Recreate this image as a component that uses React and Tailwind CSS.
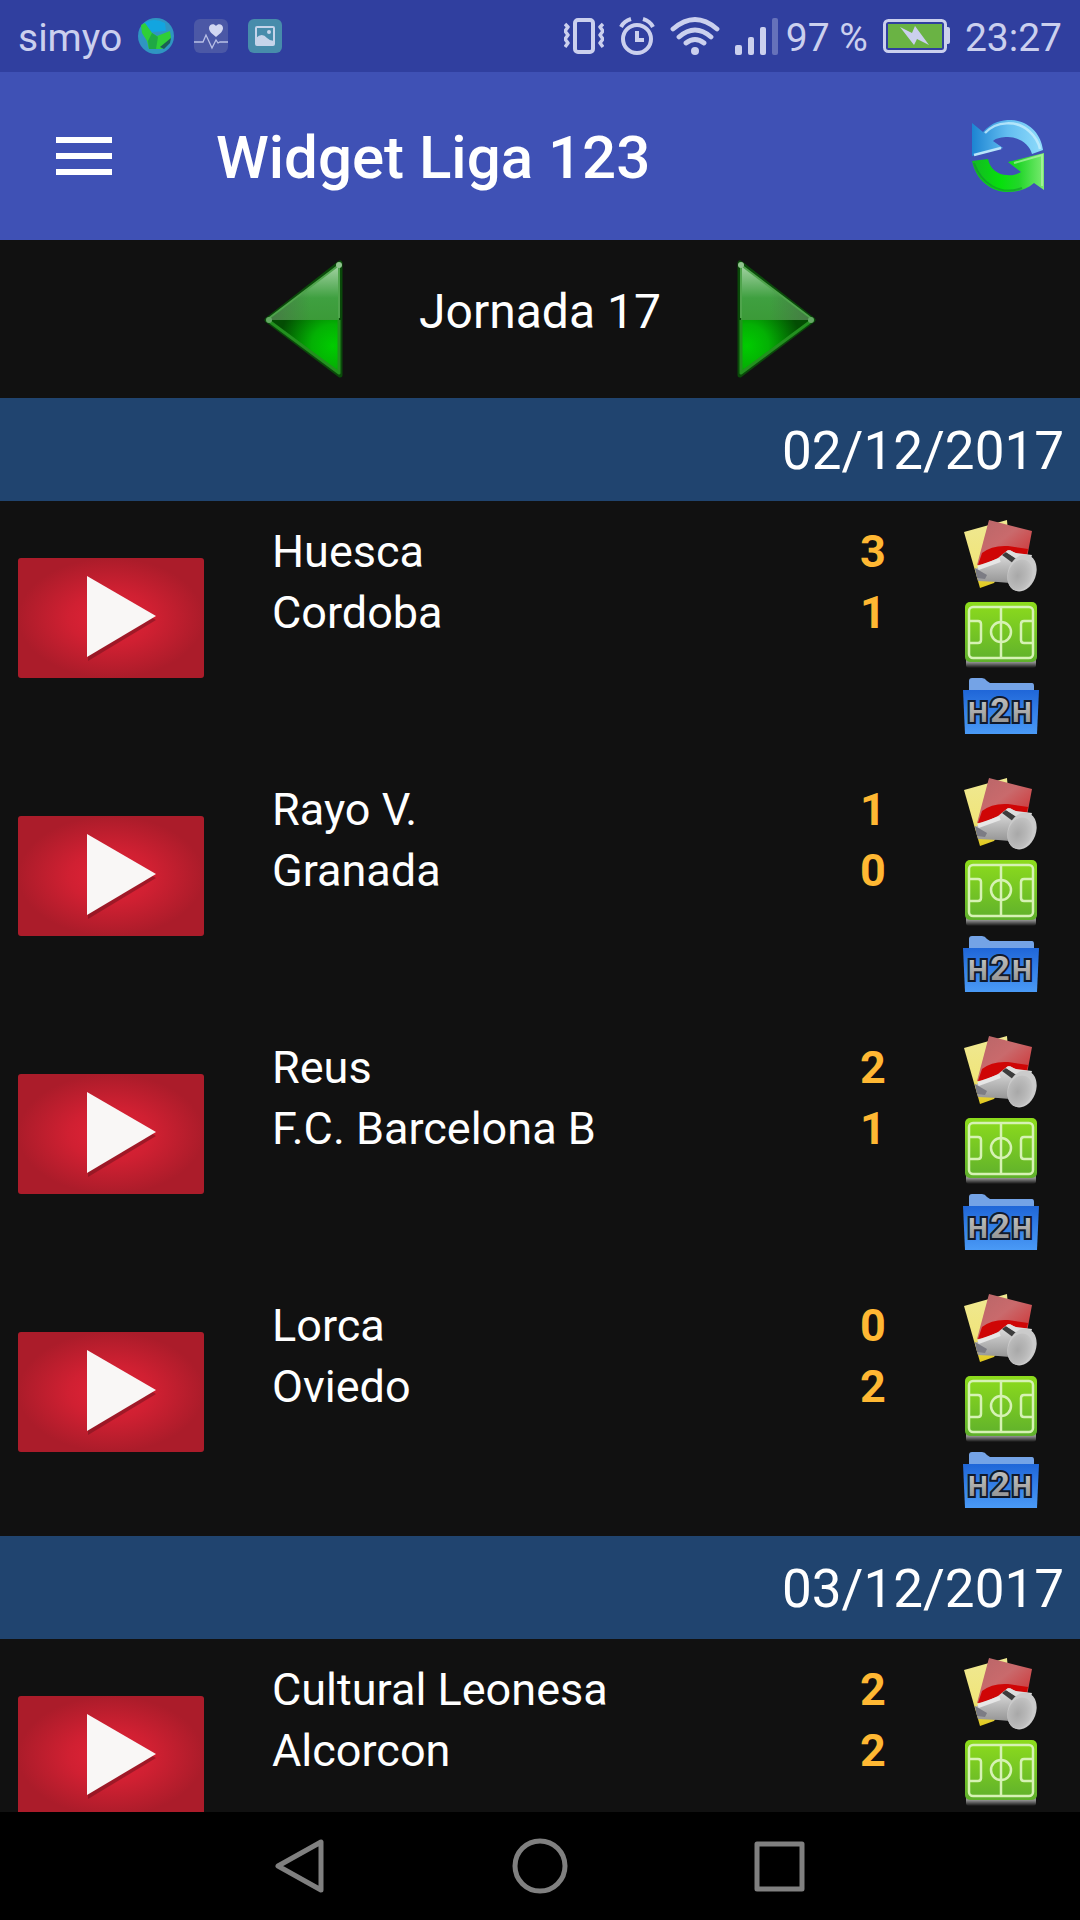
import React, { useState } from 'react'

const matchDays = [
  {
    date: '02/12/2017',
    matches: [
      { home: 'Huesca', away: 'Cordoba', score: [3, 1], h2h: true },
      { home: 'Rayo V.', away: 'Granada', score: [1, 0], h2h: true },
      { home: 'Reus', away: 'F.C. Barcelona B', score: [2, 1], h2h: true },
      { home: 'Lorca', away: 'Oviedo', score: [0, 2], h2h: true },
    ],
  },
  {
    date: '03/12/2017',
    matches: [{ home: 'Cultural Leonesa', away: 'Alcorcon', score: [2, 2], h2h: false }],
  },
]

/* gradients shared by every icon on the page */
function IconDefs() {
  return (
    <svg width="0" height="0" className="absolute" aria-hidden="true">
      <defs>
        <radialGradient id="video" cx="50%" cy="50%" r="50%">
          <stop offset="0%" stopColor="#e32337" />
          <stop offset="45%" stopColor="#d02032" />
          <stop offset="100%" stopColor="#ab1c2a" />
        </radialGradient>
        <linearGradient id="arrow-top" x1="0" x2="0" y1="0" y2="1">
          <stop offset="0%" stopColor="#a5d3a5" />
          <stop offset="60%" stopColor="#3fa040" />
          <stop offset="100%" stopColor="#3b9a38" />
        </linearGradient>
        <radialGradient id="arrow-bottom" gradientUnits="userSpaceOnUse" cx="68" cy="86" r="54">
          <stop offset="0%" stopColor="#00cc00" />
          <stop offset="40%" stopColor="#04b004" />
          <stop offset="100%" stopColor="#034d03" />
        </radialGradient>
        <linearGradient id="arrow-shade" x1="0" x2="1" y1="0" y2="0">
          <stop offset="0%" stopColor="#4b6b4b" stopOpacity="0.7" />
          <stop offset="60%" stopColor="#4b6b4b" stopOpacity="0" />
        </linearGradient>
        <linearGradient id="sync-blue" x1="0" x2="1" y1="0" y2="0">
          <stop offset="0%" stopColor="#1c84d2" />
          <stop offset="50%" stopColor="#63bdf0" />
          <stop offset="100%" stopColor="#8fdcfb" />
        </linearGradient>
        <linearGradient id="sync-green" x1="0" x2="1" y1="0" y2="0">
          <stop offset="0%" stopColor="#14b824" />
          <stop offset="40%" stopColor="#06e00c" />
          <stop offset="65%" stopColor="#22d62a" />
          <stop offset="100%" stopColor="#7aea70" />
        </linearGradient>
        <linearGradient id="card-yellow" x1="0" x2="0" y1="0" y2="1">
          <stop offset="0%" stopColor="#efe892" />
          <stop offset="60%" stopColor="#f0e57c" />
          <stop offset="100%" stopColor="#e0c81c" />
        </linearGradient>
        <linearGradient id="card-red" x1="0" x2="1" y1="0" y2="1">
          <stop offset="0%" stopColor="#b86668" />
          <stop offset="45%" stopColor="#c96a6c" />
          <stop offset="100%" stopColor="#d02a2c" />
        </linearGradient>
        <linearGradient id="whistle" x1="0" x2="0" y1="0" y2="1">
          <stop offset="0%" stopColor="#e8e8e8" />
          <stop offset="50%" stopColor="#bcbcbc" />
          <stop offset="100%" stopColor="#969696" />
        </linearGradient>
        <radialGradient id="whistle-ball" cx="42%" cy="55%" r="60%">
          <stop offset="0%" stopColor="#a8a8a8" />
          <stop offset="60%" stopColor="#b8b8b8" />
          <stop offset="100%" stopColor="#c6c6c6" />
        </radialGradient>
        <linearGradient id="pitch" x1="0" x2="0" y1="0" y2="1">
          <stop offset="0%" stopColor="#8ddc1c" />
          <stop offset="100%" stopColor="#5fb02c" />
        </linearGradient>
        <linearGradient id="pitch-shadow" x1="0" x2="0" y1="0" y2="1">
          <stop offset="0%" stopColor="#b0b0b0" />
          <stop offset="50%" stopColor="#8a8a8a" />
          <stop offset="100%" stopColor="#111111" />
        </linearGradient>
        <linearGradient id="folder" x1="0" x2="0" y1="0" y2="1">
          <stop offset="0%" stopColor="#1f66d8" />
          <stop offset="100%" stopColor="#4a9af6" />
        </linearGradient>
        <linearGradient id="metal" x1="0" x2="0" y1="0" y2="1">
          <stop offset="0%" stopColor="#c9c9c9" />
          <stop offset="100%" stopColor="#8a8a8a" />
        </linearGradient>
      </defs>
    </svg>
  )
}

function GlobeIcon() {
  return (
    <svg width="36" height="36" viewBox="0 0 36 36" aria-hidden="true">
      <circle cx="18" cy="18" r="18" fill="#2f95c2" />
      <path d="M6 5 Q16 -1 27 5 L28 13 L14 14 Z" fill="#12a5e0" />
      <path d="M3 7 L7 5 L14 15 L19 18 L32 13 L33 20 L24 31 L11 31 L9 23 L4 15 Z" fill="#2fcf38" />
      <path d="M14 15 L20 19 L18 31 L11 31 L10 23 Z" fill="#1fa845" />
      <path d="M22 29 L33 20 L32 25 L26 31 Z" fill="#1b5f55" />
    </svg>
  )
}

function HealthIcon() {
  return (
    <svg width="34" height="34" viewBox="0 0 34 34" aria-hidden="true">
      <rect width="34" height="34" rx="6" fill="#4b58a6" />
      <path d="M22 18 C17 14 15 12 15 9 C15 5 20 4 22 7 C24 4 29 5 29 9 C29 12 27 14 22 18 Z" fill="#d3d8f2" />
      <path d="M0 23 h9 l3 -7 l6 13 l4 -8 l2 3 l2 -1 h8" fill="none" stroke="#b9c0e6" strokeWidth="1.3" />
    </svg>
  )
}

function GalleryIcon() {
  return (
    <svg width="34" height="34" viewBox="0 0 34 34" aria-hidden="true">
      <rect width="34" height="34" rx="6" fill="#478cab" />
      <rect x="8" y="8" width="18" height="18" rx="1" fill="none" stroke="#c5d4ea" strokeWidth="2" />
      <circle cx="21" cy="13" r="2" fill="#c5d4ea" />
      <path d="M8 26 V19 Q14 13 19 19 Q22 22 26 22 V26 Z" fill="#c5d4ea" />
    </svg>
  )
}

function VibrateIcon() {
  return (
    <svg width="40" height="36" viewBox="0 0 40 36" fill="none" stroke="currentColor" aria-hidden="true">
      <rect x="11" y="2" width="18" height="32" rx="3" strokeWidth="4" />
      <path d="M1 6 l3 3 l-3 4 l3 4 l-3 4 l3 4 l-3 4" strokeWidth="3.5" strokeLinejoin="round" />
      <path d="M39 6 l-3 3 l3 4 l-3 4 l3 4 l-3 4 l3 4" strokeWidth="3.5" strokeLinejoin="round" />
    </svg>
  )
}

function AlarmIcon() {
  return (
    <svg width="36" height="38" viewBox="0 0 36 38" fill="none" stroke="currentColor" aria-hidden="true">
      <circle cx="18" cy="22" r="14" strokeWidth="4" />
      <path d="M18 14 v9 h7" strokeWidth="4" />
      <path d="M2 10 Q5 4 12 2 M34 10 Q31 4 24 2" strokeWidth="4" />
    </svg>
  )
}

function WifiIcon() {
  return (
    <svg width="50" height="38" viewBox="0 0 50 38" fill="none" stroke="currentColor" strokeLinecap="round" aria-hidden="true">
      <path d="M3 12 Q25 -7 47 12 M9 20 Q25 6 41 20 M16 26 Q25 19 34 26" strokeWidth="4.8" />
      <circle cx="25" cy="34" r="4" fill="currentColor" stroke="none" />
    </svg>
  )
}

function SignalIcon() {
  return (
    <svg width="44" height="37" viewBox="0 0 44 37" fill="currentColor" aria-hidden="true">
      <rect x="0" y="27" width="7" height="10" rx="2" />
      <rect x="13" y="19" width="6" height="18" rx="2" />
      <rect x="25" y="9" width="6" height="28" rx="2" />
      <rect x="37" y="0" width="6" height="37" rx="2" opacity="0.35" />
    </svg>
  )
}

function BatteryIcon() {
  return (
    <svg width="67" height="34" viewBox="0 0 67 34" aria-hidden="true">
      <rect x="1.5" y="1.5" width="61" height="31" rx="4" fill="none" stroke="currentColor" strokeWidth="3" />
      <path d="M63 8 h2 q2 0 2 2 v13 q0 2 -2 2 h-2 Z" fill="currentColor" />
      <rect x="5" y="5" width="54" height="24" fill="#6ab344" />
      <path d="M17 8 L29 14 L32 7 L46 26 L34 20 L31 26 Z" fill="currentColor" />
    </svg>
  )
}

function SyncIcon() {
  return (
    <svg width="72" height="72" viewBox="0 0 72 72" aria-hidden="true">
      <path
        d="M0 3 L11 12 C20 2 29 0 39 0 C57 1 69 14 71 30 L60 34 C58 25 47 17 36 17 C30 17 24 18 21 21 L31 28 L0 36 Z"
        fill="url(#sync-blue)"
      />
      <path d="M13 13 C24 1 45 0 57 11 Q66 19 68 29" fill="none" stroke="#c5eefc" strokeWidth="2.5" opacity="0.8" />
      <path d="M2 35 L29 28" stroke="#b9e5fa" strokeWidth="2.5" />
      <path
        d="M72 70 L62 63 C54 70 45 72 35 72 C18 71 4 60 0 41 L16 39 C18 49 26 55 35 55 C41 56 45 54 49 52 L36 42 L72 33 Z"
        fill="url(#sync-green)"
      />
      <path d="M42 43 L70 35 V66" fill="none" stroke="#b4f5a8" strokeWidth="2" opacity="0.7" />
      <path d="M2 43 Q7 58 20 66 Q34 74 50 68" fill="none" stroke="#14902f" strokeWidth="2" opacity="0.6" />
    </svg>
  )
}

function RoundArrow({ flip = false }) {
  return (
    <svg width="80" height="118" viewBox="-1 0 80 118" className={flip ? '-scale-x-100' : ''} aria-hidden="true">
      <path d="M75 3 V115 L2 60 Z" fill="#064d06" stroke="#0a4a0a" strokeWidth="5" strokeLinejoin="round" />
      <path d="M74 5 V60 H3 Z" fill="url(#arrow-top)" />
      <path d="M74 5 V60 H3 Z" fill="url(#arrow-shade)" />
      <path d="M3 60 H74 V113 Z" fill="url(#arrow-bottom)" />
      <path d="M4 61 L74 113 V60" fill="none" stroke="#23901f" strokeWidth="3" strokeLinejoin="round" />
      <path d="M3 59 L74 5 V58" fill="none" stroke="#4fa44c" strokeWidth="2" strokeLinejoin="round" />
      <circle cx="4" cy="60" r="3" fill="#64a864" />
      <circle cx="74" cy="5" r="3" fill="#8fc48d" />
    </svg>
  )
}

function VideoIcon() {
  return (
    <svg width="186" height="120" viewBox="0 0 186 120" aria-hidden="true">
      <rect width="186" height="120" rx="3" fill="url(#video)" />
      <path d="M70 22 L138 62 L70 103 Z" fill="#7d1420" opacity="0.6" />
      <path d="M69 18 L138 58 L69 99 Z" fill="#f9f7f6" />
    </svg>
  )
}

function CardsIcon() {
  return (
    <svg width="74" height="74" viewBox="0 0 74 74" aria-hidden="true">
      <path d="M0 13 L43 1 L46 40 L30 64 L16 69 Z" fill="url(#card-yellow)" />
      <path d="M25 1 L68 12 L62 44 L13 46 Z" fill="url(#card-red)" />
      <path d="M14 46 L18 34 Q28 26 44 27 L64 30 L61 42 L40 40 Z" fill="#cf0606" />
      <path d="M11 50 L34 39 L44 31 L52 34 L68 36 L64 50 L46 64 L34 63 L14 62 Z" fill="url(#whistle)" />
      <path d="M11 49 L23 56 L21 60 L13 59 Z" fill="#7c7c84" />
      <path d="M14 49 L36 41" fill="none" stroke="#e6e6e6" strokeWidth="4" />
      <path d="M38 36 L42 33 L54 41 L50 45 Z" fill="#3c3c3c" />
      <path d="M42 33 L46 31 L58 38 L55 41 Z" fill="#dedede" />
      <ellipse cx="58" cy="54" rx="14" ry="19" fill="#cbcbcb" transform="rotate(20 58 54)" />
      <ellipse cx="56" cy="56" rx="12" ry="16" fill="url(#whistle-ball)" transform="rotate(20 56 56)" />
    </svg>
  )
}

function PitchIcon() {
  return (
    <svg width="74" height="68" viewBox="0 0 74 68" aria-hidden="true">
      <rect x="2" y="56" width="70" height="11" rx="3" fill="url(#pitch-shadow)" />
      <rect x="1" y="1" width="72" height="60" rx="5" fill="url(#pitch)" />
      <g fill="none" stroke="#d6f2b4" strokeWidth="2.5">
        <rect x="5" y="6" width="64" height="51" rx="4" />
        <path d="M37 6 V57" />
        <circle cx="37" cy="31" r="10" />
        <path d="M5 20 H14 Q17 20 17 23 V39 Q17 42 14 42 H5 M69 20 H60 Q57 20 57 23 V39 Q57 42 60 42 H69" />
      </g>
    </svg>
  )
}

function HeadToHeadIcon() {
  return (
    <svg width="76" height="58" viewBox="0 0 76 58" aria-hidden="true">
      <path d="M6 14 V4 Q6 1 9 1 H19 Q22 1 24 4 L27 6 H69 Q71 6 71 9 V14 Z" fill="#74a3e6" />
      <path d="M0 13 H76 L74 57 H2 Z" fill="url(#folder)" />
      <g
        fill="url(#metal)"
        stroke="#10192b"
        strokeWidth="4"
        paintOrder="stroke"
        fontFamily="Roboto, sans-serif"
        fontWeight="bold"
        textAnchor="middle"
      >
        <text x="15" y="45" fontSize="28">H</text>
        <text x="59" y="45" fontSize="28">H</text>
        <text x="37" y="45" fontSize="34">2</text>
      </g>
    </svg>
  )
}

function StatusBar() {
  return (
    <div className="flex h-18 items-center justify-between bg-[#303f9f] pl-[18px] pr-[18px] text-[39px] leading-none text-[#cbd0ee]">
      <div className="flex items-center gap-5">
        <span className="-mr-1 pt-1">simyo</span>
        <GlobeIcon />
        <HealthIcon />
        <GalleryIcon />
      </div>
      <div className="flex items-center gap-[15px]">
        <VibrateIcon />
        <AlarmIcon />
        <WifiIcon />
        <SignalIcon />
        <span className="-ml-2 pt-1">97 %</span>
        <BatteryIcon />
        <span className="pt-1">23:27</span>
      </div>
    </div>
  )
}

function Header() {
  return (
    <header className="flex h-42 items-center bg-[#3f51b5] pl-14 pr-9">
      <button type="button" aria-label="Menu" className="flex w-14 flex-col gap-[10px]">
        <span className="h-[6px] bg-white" />
        <span className="h-[6px] bg-white" />
        <span className="h-[6px] bg-white" />
      </button>
      <h1 className="ml-26 flex-1 pt-1 text-[60px] font-medium leading-none text-white">Widget Liga 123</h1>
      <button type="button" aria-label="Actualizar">
        <SyncIcon />
      </button>
    </header>
  )
}

function RoundPicker({ round, onChange }) {
  return (
    <div className="flex h-[158px] items-start justify-center gap-[75px] pt-5">
      <button type="button" aria-label="Jornada anterior" onClick={() => onChange(round - 1)}>
        <RoundArrow />
      </button>
      <h2 className="pt-7 text-[48px] leading-none">Jornada {round}</h2>
      <button type="button" aria-label="Jornada siguiente" onClick={() => onChange(round + 1)}>
        <RoundArrow flip />
      </button>
    </div>
  )
}

function MatchRow({ match }) {
  const teams = [match.home, match.away]
  return (
    <li className="flex h-[258px] items-start pl-[18px] pr-[41px]">
      <button type="button" aria-label={`Video ${match.home} - ${match.away}`} className="mt-[57px]">
        <VideoIcon />
      </button>
      <div className="ml-17 flex-1 pt-5 text-[45px] leading-[61px]">
        {teams.map((team, i) => (
          <div key={team} className="flex">
            <span className="flex-1">{team}</span>
            <span className="w-[26px] text-center font-bold text-[#ffb833]">{match.score[i]}</span>
          </div>
        ))}
      </div>
      <div className="ml-[77px] flex w-[76px] flex-col items-center gap-2 pt-[18px]">
        <button type="button" aria-label="Tarjetas">
          <CardsIcon />
        </button>
        <button type="button" aria-label="Alineaciones">
          <PitchIcon />
        </button>
        {match.h2h && (
          <button type="button" aria-label="H2H">
            <HeadToHeadIcon />
          </button>
        )}
      </div>
    </li>
  )
}

function NavBar() {
  return (
    <nav className="flex h-27 items-center justify-center gap-[184px] bg-black text-[#808080]">
      <button type="button" aria-label="Back">
        <svg width="56" height="60" viewBox="0 0 56 60" fill="none" stroke="currentColor" strokeWidth="5" strokeLinejoin="round">
          <path d="M49 6 V54 L6 30 Z" />
        </svg>
      </button>
      <button type="button" aria-label="Home">
        <svg width="56" height="56" viewBox="0 0 56 56" fill="none" stroke="currentColor" strokeWidth="5">
          <circle cx="28" cy="28" r="25" />
        </svg>
      </button>
      <button type="button" aria-label="Recent apps">
        <svg width="56" height="56" viewBox="0 0 56 56" fill="none" stroke="currentColor" strokeWidth="5" strokeLinejoin="round">
          <rect x="5" y="6" width="45" height="45" />
        </svg>
      </button>
    </nav>
  )
}

export default function App() {
  const [round, setRound] = useState(17)

  return (
    <div className="flex h-screen flex-col overflow-hidden bg-[#111111] font-[Roboto,sans-serif] text-white">
      <IconDefs />
      <StatusBar />
      <Header />
      <main className="min-h-0 flex-1 overflow-hidden">
        <RoundPicker round={round} onChange={setRound} />
        {matchDays.map(day => (
          <section key={day.date} className="mb-[3px]">
            <h3 className="bg-[#20446f] pr-4 pt-1 text-right text-[53px] leading-[99px]">{day.date}</h3>
            <ul>
              {day.matches.map(match => (
                <MatchRow key={match.home} match={match} />
              ))}
            </ul>
          </section>
        ))}
      </main>
      <NavBar />
    </div>
  )
}
